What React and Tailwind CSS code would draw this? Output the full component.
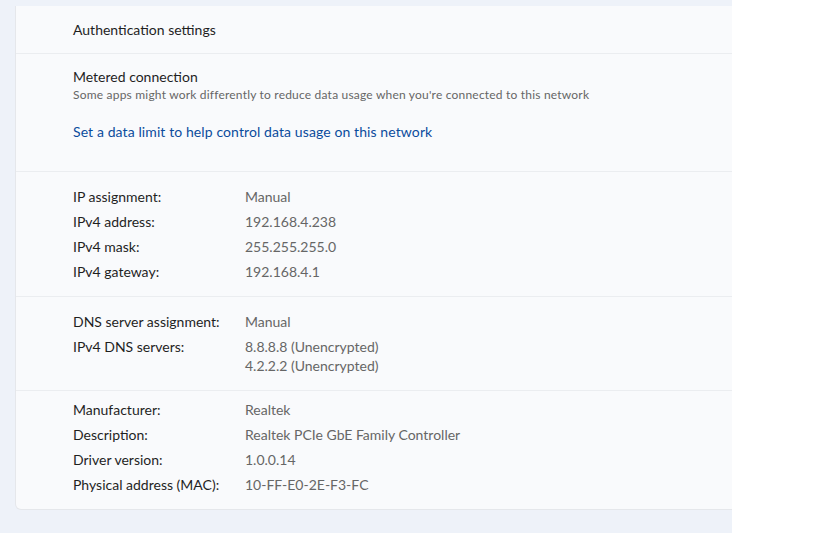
import React from "react";

const ipRows = [
  ["IP assignment:", "Manual"],
  ["IPv4 address:", "192.168.4.238"],
  ["IPv4 mask:", "255.255.255.0"],
  ["IPv4 gateway:", "192.168.4.1"],
];

const hwRows = [
  ["Manufacturer:", "Realtek"],
  ["Description:", "Realtek PCIe GbE Family Controller"],
  ["Driver version:", "1.0.0.14"],
  ["Physical address (MAC):", "10-FF-E0-2E-F3-FC"],
];

function Row({ label, children }) {
  return (
    <div className="flex h-[25px] items-center">
      <div className="w-[172px] text-[#1f1f1f]">{label}</div>
      <div className="text-[#666666]">{children}</div>
    </div>
  );
}

export default function App() {
  return (
    <div
      className="flex h-[533px] w-[819px] bg-white text-[14px]"
      style={{ fontFamily: "Lato, 'Liberation Sans', sans-serif" }}
    >
      <div className="h-full w-[732px] overflow-hidden bg-[#eef2f9] pt-[6px] pl-[15px]">
        <div className="w-[760px] rounded-b-[6px] border border-t-0 border-[#e5e7eb] bg-[#f9fafc]">
          {/* Authentication */}
          <div className="flex h-[47px] items-center pl-[57px] text-[#1f1f1f]">
            Authentication settings
          </div>

          {/* Metered connection */}
          <div className="border-t border-[#ebedf0] pt-[13px] pb-[29px] pl-[57px]">
            <div className="leading-[20px] text-[#1f1f1f]">Metered connection</div>
            <div className="text-[12px] leading-[16px] tracking-[0.2px] text-[#666666]">
              Some apps might work differently to reduce data usage when you're connected to this network
            </div>
            <div className="mt-[19px] leading-[20px] tracking-[0.1px] text-[#0b4c9c]">
              Set a data limit to help control data usage on this network
            </div>
          </div>

          {/* IP */}
          <div className="border-t border-[#ebedf0] pt-[12px] pb-[12px] pl-[57px]">
            {ipRows.map(([l, v]) => (
              <Row key={l} label={l}>{v}</Row>
            ))}
          </div>

          {/* DNS */}
          <div className="border-t border-[#ebedf0] pt-[12px] pb-[15px] pl-[57px]">
            <Row label="DNS server assignment:">Manual</Row>
            <div className="flex pt-[3px] leading-[19px]">
              <div className="w-[172px] text-[#1f1f1f]">IPv4 DNS servers:</div>
              <div className="text-[#666666]">
                <div>8.8.8.8 (Unencrypted)</div>
                <div>4.2.2.2 (Unencrypted)</div>
              </div>
            </div>
          </div>

          {/* Hardware */}
          <div className="border-t border-[#ebedf0] pt-[6px] pb-[12px] pl-[57px]">
            {hwRows.map(([l, v]) => (
              <Row key={l} label={l}>{v}</Row>
            ))}
          </div>
        </div>
      </div>
    </div>
  );
}
